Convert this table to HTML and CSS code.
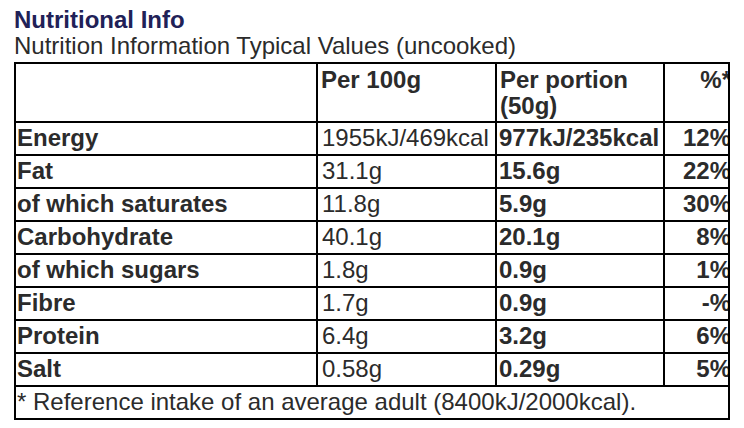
FILE: index.html
```html
<!DOCTYPE html>
<html lang="en">
<head>
    <meta charset="UTF-8">
    <meta name="viewport" content="width=device-width, initial-scale=1.0">
    <title>Nutritional Info</title>
    <link rel="stylesheet" href="styles.css">
</head>
<body>

    <div class="nutrition">
        <h2 class="nutrition-title">Nutritional Info</h2>
        <p class="nutrition-sub">Nutrition Information Typical Values (uncooked)</p>

        <!-- Tabla de valores -->
        <div class="table-wrap">
            <table class="nutrition-table">
                <colgroup>
                    <col class="col-name">
                    <col class="col-100">
                    <col class="col-portion">
                    <col class="col-ri">
                </colgroup>
                <thead>
                    <tr>
                        <th></th>
                        <th>Per 100g</th>
                        <th>Per portion (50g)</th>
                        <th class="ri">%*</th>
                    </tr>
                </thead>
                <tbody>
                    <tr><th>Energy</th><td>1955kJ/469kcal</td><td class="strong">977kJ/235kcal</td><td class="ri">12%</td></tr>
                    <tr><th>Fat</th><td>31.1g</td><td class="strong">15.6g</td><td class="ri">22%</td></tr>
                    <tr><th>of which saturates</th><td>11.8g</td><td class="strong">5.9g</td><td class="ri">30%</td></tr>
                    <tr><th>Carbohydrate</th><td>40.1g</td><td class="strong">20.1g</td><td class="ri">8%</td></tr>
                    <tr><th>of which sugars</th><td>1.8g</td><td class="strong">0.9g</td><td class="ri">1%</td></tr>
                    <tr><th>Fibre</th><td>1.7g</td><td class="strong">0.9g</td><td class="ri">-%</td></tr>
                    <tr><th>Protein</th><td>6.4g</td><td class="strong">3.2g</td><td class="ri">6%</td></tr>
                    <tr><th>Salt</th><td>0.58g</td><td class="strong">0.29g</td><td class="ri">5%</td></tr>
                </tbody>
                <tfoot>
                    <tr><td colspan="4" class="note">* Reference intake of an average adult (8400kJ/2000kcal).</td></tr>
                </tfoot>
            </table>
        </div>
    </div>

</body>
</html>
```

FILE: styles.css
```css
/* Estilos generales */
* {
    box-sizing: border-box;
    margin: 0;
    padding: 0;
}

body {
    font-family: "Liberation Sans", Arial, sans-serif;
    color: #2b2b2b;
    background: #fff;
}

.nutrition {
    padding: 7px 14px;
}

.nutrition-title {
    font-size: 24px;
    font-weight: bold;
    color: #212157;
    line-height: 25px;
}

.nutrition-sub {
    font-size: 24px;
    line-height: 27px;
    margin-bottom: 3px;
}

/* Tabla */
.table-wrap {
    width: 716px;
    overflow: hidden;
    border-right: 2px solid #000;
}

.nutrition-table {
    width: 717px;
    border-collapse: collapse;
    table-layout: fixed;
    font-size: 24px;
    line-height: 26px;
}

.col-name { width: 302px; }
.col-100 { width: 179px; }
.col-portion { width: 168px; }
.col-ri { width: 68px; }

.nutrition-table th,
.nutrition-table td {
    border: 2px solid #000;
    padding: 2px 1px 3px 1px;
    text-align: left;
    vertical-align: top;
    white-space: nowrap;
}

.nutrition-table thead th {
    padding: 3px 4px 1px 3px;
    white-space: normal;
    height: 59px;
}

.nutrition-table td {
    padding-left: 4px;
}

.nutrition-table .strong {
    font-weight: bold;
    padding-left: 2px;
}

.nutrition-table .ri {
    text-align: right;
    font-weight: bold;
    padding-right: 0;
}

.nutrition-table .note {
    padding-left: 1px;
}
```
